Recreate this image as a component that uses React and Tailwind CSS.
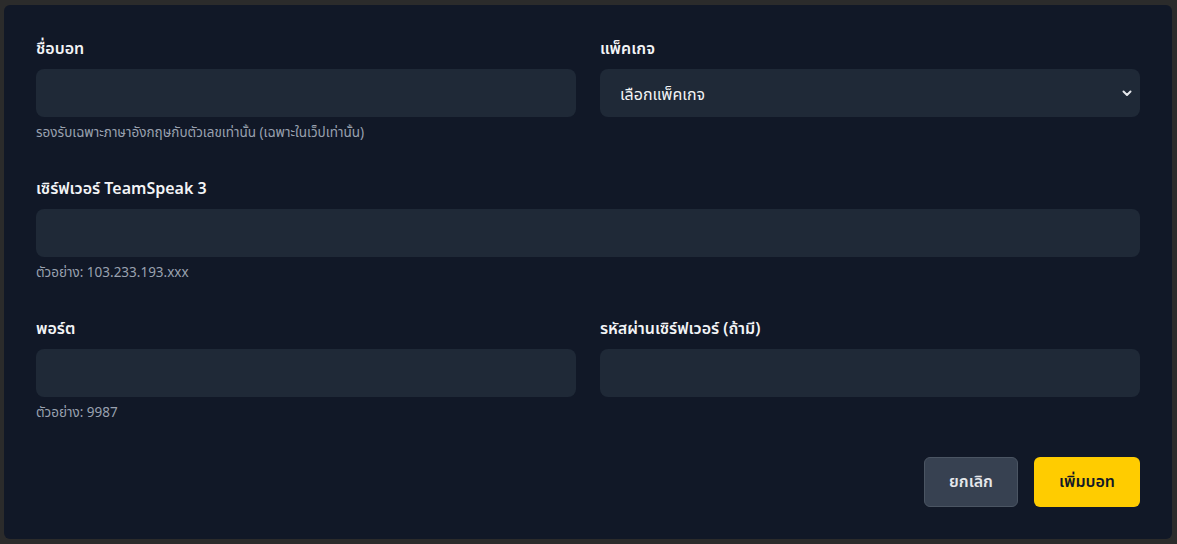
import React from "react";

const Field = ({ label, hint, children }) => (
  <div className="flex flex-col">
    <label className="text-base leading-6 font-semibold text-gray-100 mb-2">{label}</label>
    {children}
    {hint && <p className="mt-1.5 text-[13.5px] leading-5 text-gray-400">{hint}</p>}
  </div>
);

const Input = () => (
  <input
    type="text"
    className="h-12 w-full rounded-lg bg-[#1f2937] px-5 text-base text-gray-100 outline-none"
  />
);

export default function App() {
  return (
    <div
      className="min-h-[544px] bg-[#2b2b2b] px-[4px] pt-[5px] pb-[5px]"
      style={{ fontFamily: '"Noto Sans Thai", "Noto Sans", "Liberation Sans", sans-serif' }}
    >
      <div className="rounded-md bg-[#111827] p-8 w-[1168px]">
        <div className="grid grid-cols-2 gap-x-6 gap-y-[34px]">
          <Field label="ชื่อบอท" hint="รองรับเฉพาะภาษาอังกฤษกับตัวเลขเท่านั้น (เฉพาะในเว็ปเท่านั้น)">
            <Input />
          </Field>
          <Field label="แพ็คเกจ">
            <div className="relative">
              <select className="h-12 w-full appearance-none rounded-lg bg-[#1f2937] px-5 pt-1 text-base text-gray-100 outline-none">
                <option>เลือกแพ็คเกจ</option>
              </select>
              <svg
                className="pointer-events-none absolute right-[7px] top-1/2 -translate-y-1/2"
                width="12"
                height="12"
                viewBox="0 0 12 12"
                fill="none"
              >
                <path d="M2.5 4.5 L6 8 L9.5 4.5" stroke="#e5e7eb" strokeWidth="2" strokeLinecap="round" strokeLinejoin="round" />
              </svg>
            </div>
          </Field>
          <div className="col-span-2">
            <Field label="เซิร์ฟเวอร์ TeamSpeak 3" hint="ตัวอย่าง: 103.233.193.xxx">
              <Input />
            </Field>
          </div>
          <Field label="พอร์ต" hint="ตัวอย่าง: 9987">
            <Input />
          </Field>
          <Field label="รหัสผ่านเซิร์ฟเวอร์ (ถ้ามี)">
            <Input />
          </Field>
        </div>
        <div className="mt-[34px] flex justify-end gap-4">
          <button className="h-[50px] w-[94px] rounded-md border border-[#4b5563] bg-[#374151] text-base font-semibold text-gray-200">
            ยกเลิก
          </button>
          <button className="h-[50px] w-[106px] rounded-md bg-[#ffcc00] text-base font-semibold text-[#111827]">
            เพิ่มบอท
          </button>
        </div>
      </div>
    </div>
  );
}
